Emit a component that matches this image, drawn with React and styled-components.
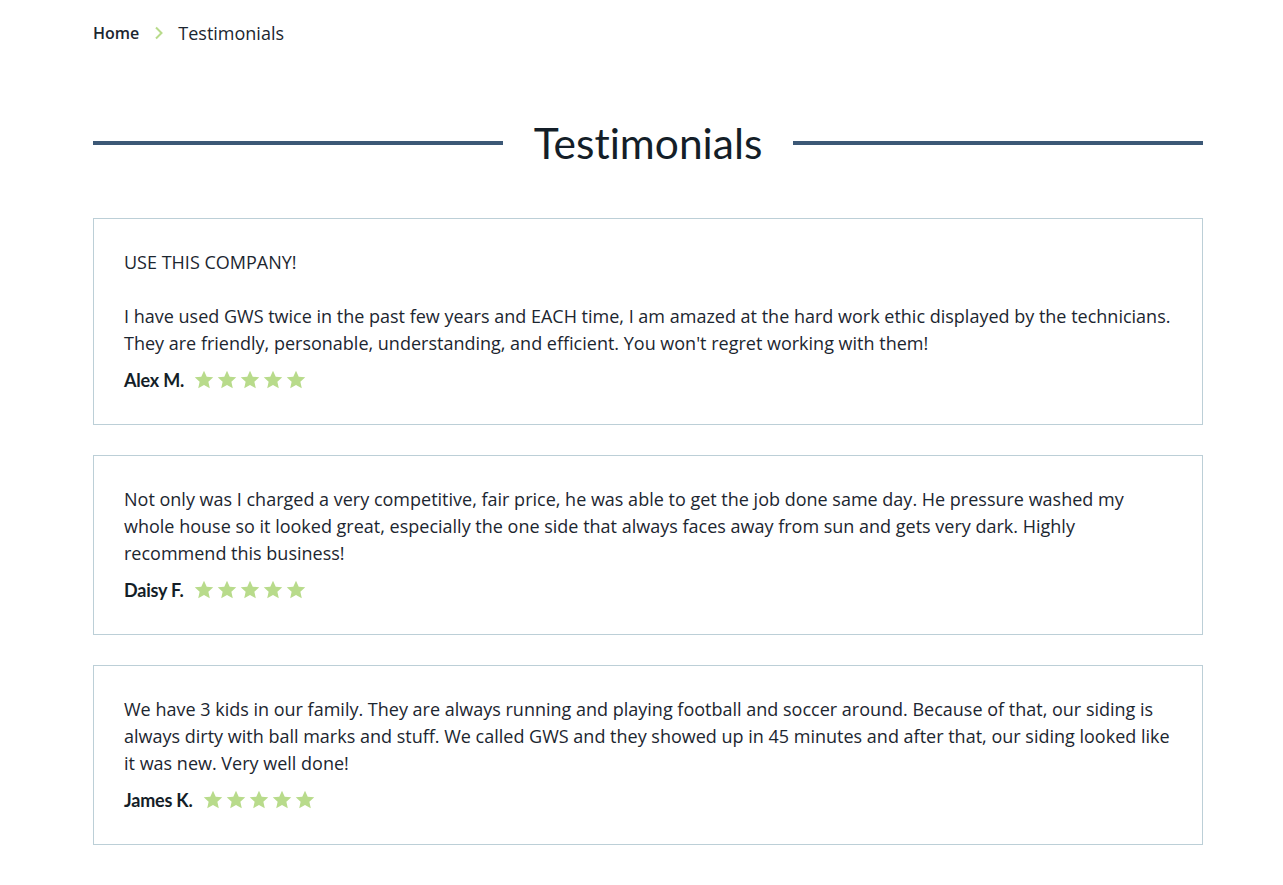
import React from 'react';
import styled, { createGlobalStyle } from 'styled-components';

const GlobalStyle = createGlobalStyle`
  body {
    margin: 0;
    background: #ffffff;
    font-family: "Open Sans", "Liberation Sans", sans-serif;
    color: #1c2630;
  }
`;

const Page = styled.div`
  width: 1110px;
  margin-left: 93px;
  padding-bottom: 40px;
`;

const Breadcrumb = styled.nav`
  display: flex;
  align-items: center;
  height: 66px;
`;

const Crumb = styled.span`
  font-size: ${(p) => (p.$current ? '18px' : '16px')};
  font-weight: ${(p) => (p.$current ? 400 : 600)};
  color: #1c2630;
`;

const Chevron = styled.svg`
  width: 12px;
  height: 14px;
  margin: 0 13px 0 14px;
`;

const TitleRow = styled.div`
  display: flex;
  align-items: center;
  gap: 31px;
  margin-top: 52px;
  margin-bottom: 50px;
`;

const Rule = styled.div`
  flex: 1;
  height: 4px;
  background: #3c5876;
`;

const Title = styled.h1`
  margin: 0;
  font-family: Lato, "Liberation Sans", sans-serif;
  font-weight: 400;
  font-size: 42.5px;
  line-height: 50px;
  color: #141e28;
  font-variant-ligatures: none;
`;

const List = styled.div`
  display: flex;
  flex-direction: column;
  gap: 30px;
`;

const Card = styled.div`
  border: 1px solid #bccfd7;
  padding: 30px 30px 31px;
`;

const Text = styled.p`
  margin: 0 0 9px;
  font-size: 18px;
  line-height: 27px;
  color: #1c2630;
`;

const Footer = styled.div`
  display: flex;
  align-items: center;
  gap: 10px;
  height: 27px;
`;

const Name = styled.span`
  font-family: Lato, "Liberation Sans", sans-serif;
  font-weight: 700;
  font-size: 18px;
  color: #141e28;
  letter-spacing: -0.2px;
`;

const Stars = styled.div`
  display: flex;
  gap: 3px;
`;

const Star = () => (
  <svg width="20" height="19" viewBox="0 0 24 23">
    <path
      d="M12 0.8l3.3 7.3 7.9 0.8-5.9 5.4 1.7 7.8L12 18.1l-7 4 1.7-7.8L0.8 8.9l7.9-0.8z"
      fill="#b8db8b"
    />
  </svg>
);

const reviews = [
  {
    title: 'USE THIS COMPANY!',
    text: "I have used GWS twice in the past few years and EACH time, I am amazed at the hard work ethic displayed by the technicians. They are friendly, personable, understanding, and efficient. You won't regret working with them!",
    name: 'Alex M.',
  },
  {
    text: 'Not only was I charged a very competitive, fair price, he was able to get the job done same day. He pressure washed my whole house so it looked great, especially the one side that always faces away from sun and gets very dark. Highly recommend this business!',
    name: 'Daisy F.',
  },
  {
    text: 'We have 3 kids in our family. They are always running and playing football and soccer around. Because of that, our siding is always dirty with ball marks and stuff. We called GWS and they showed up in 45 minutes and after that, our siding looked like it was new. Very well done!',
    name: 'James K.',
  },
];

export default function App() {
  return (
    <>
      <GlobalStyle />
      <Page>
        <Breadcrumb>
          <Crumb>Home</Crumb>
          <Chevron viewBox="0 0 12 14">
            <path d="M3 1.5l5.5 5.5L3 12.5" fill="none" stroke="#b8db8b" strokeWidth="2" />
          </Chevron>
          <Crumb $current>Testimonials</Crumb>
        </Breadcrumb>
        <TitleRow>
          <Rule />
          <Title>Testimonials</Title>
          <Rule />
        </TitleRow>
        <List>
          {reviews.map((r) => (
            <Card key={r.name}>
              <Text>
                {r.title && (
                  <>
                    {r.title}
                    <br />
                    <br />
                  </>
                )}
                {r.text}
              </Text>
              <Footer>
                <Name>{r.name}</Name>
                <Stars>
                  {[0, 1, 2, 3, 4].map((i) => (
                    <Star key={i} />
                  ))}
                </Stars>
              </Footer>
            </Card>
          ))}
        </List>
      </Page>
    </>
  );
}
